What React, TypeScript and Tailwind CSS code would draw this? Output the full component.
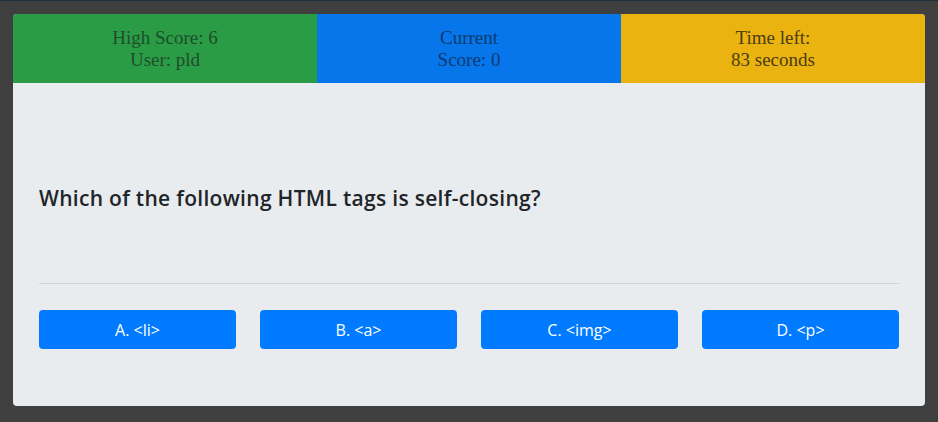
export default function App() {
  const answers = ["A. <li>", "B. <a>", "C. <img>", "D. <p>"];
  return (
    <div className="w-[938px] h-[422px] bg-[#3f3f3f] border-t border-[#1f2f3b] pt-[13px] px-[13px]">
      <div className="w-[912px] h-[392px] bg-[#e9ecef] rounded-[4px] overflow-hidden flex flex-col">
        <div className="grid grid-cols-3 h-[69px] font-['Liberation_Serif',serif] text-[19px] leading-[22px] text-center">
          <div className="bg-[#2a9c46] text-[#1f4d2b] flex flex-col items-center justify-center">
            <div>High Score: 6</div>
            <div>User: pld</div>
          </div>
          <div className="bg-[#0776ea] text-[#0c3a70] flex flex-col items-center justify-center">
            <div>Current</div>
            <div>Score: 0</div>
          </div>
          <div className="bg-[#ebb30f] text-[#4a3d12] flex flex-col items-center justify-center">
            <div>Time left:</div>
            <div>83 seconds</div>
          </div>
        </div>
        <div className="px-[26px] font-['Open_Sans',sans-serif]">
          <div className="pt-[100px] pb-[70px] text-[21px] leading-[30px] font-semibold tracking-[0.3px] text-[#212529]">
            Which of the following HTML tags is self-closing?
          </div>
          <div className="h-px bg-[#d3d6d9]" />
          <div className="mt-[26px] grid grid-cols-4 gap-[24px]">
            {answers.map((a) => (
              <button
                key={a}
                className="h-[39px] bg-[#007bff] text-white rounded-[4px] text-[16px]"
              >
                {a}
              </button>
            ))}
          </div>
        </div>
      </div>
    </div>
  );
}
